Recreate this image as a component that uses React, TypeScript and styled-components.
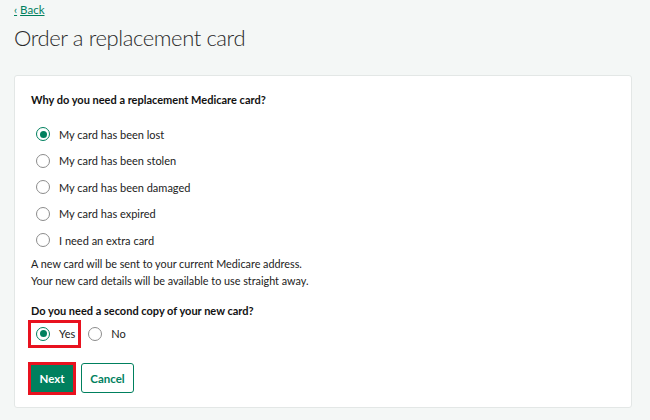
import React, { useState } from "react";
import styled, { createGlobalStyle } from "styled-components";

const GREEN = "#00805e";
const RED = "#e8121f";

const GlobalStyle = createGlobalStyle`
  html, body {
    margin: 0;
    padding: 0;
    background: #f4f7f6;
    font-family: Lato, "Open Sans", sans-serif;
    color: #222;
  }
`;

const Page = styled.div`
  padding: 1px 14px 0 14px;
  width: 618px;
`;

const BackLink = styled.a`
  display: flex;
  width: fit-content;
  align-items: center;
  gap: 3px;
  height: 16px;
  font-size: 11.5px;
  color: ${GREEN};
  text-decoration: underline;
  cursor: pointer;
  span.chev {
    font-size: 11px;
    text-decoration: none;
    display: inline-block;
  }
`;

const Title = styled.h1`
  margin: 6px 0 22px 0;
  font-size: 22px;
  line-height: 30px;
  font-weight: 300;
  letter-spacing: -0.4px;
  color: #2a2a2a;
`;

const Card = styled.form`
  background: #fff;
  border: 1px solid #e3e7e6;
  border-radius: 3px;
  padding: 16px 16px 12px 16px;
`;

const Question = styled.div<{ $gap: number }>`
  font-size: 11px;
  line-height: 16px;
  font-weight: 700;
  color: #111;
  margin-bottom: ${({ $gap }) => $gap}px;
`;

const RadioList = styled.div`
  display: flex;
  flex-direction: column;
  gap: 8px;
  margin-bottom: 5.5px;
`;

const RadioRow = styled.label<{ $highlight?: boolean }>`
  display: inline-flex;
  align-items: center;
  gap: 9px;
  height: ${({ $highlight }) => ($highlight ? "28px" : "18.5px")};
  box-sizing: border-box;
  font-size: 11px;
  color: #222;
  cursor: pointer;
  padding: ${({ $highlight }) => ($highlight ? "0 3px 0 5px" : "0 0 0 5px")};
  border: ${({ $highlight }) => ($highlight ? `3px solid ${RED}` : "none")};
`;

const Dot = styled.span<{ $checked: boolean }>`
  width: 14px;
  height: 14px;
  box-sizing: border-box;
  border-radius: 50%;
  border: 1.5px solid ${({ $checked }) => ($checked ? GREEN : "#8c8c8c")};
  display: inline-flex;
  align-items: center;
  justify-content: center;
  background: #fff;
  &::after {
    content: "";
    width: 7px;
    height: 7px;
    border-radius: 50%;
    background: ${GREEN};
    display: ${({ $checked }) => ($checked ? "block" : "none")};
  }
`;

const Info = styled.p`
  margin: 0 0 13.5px 0;
  font-size: 10.8px;
  line-height: 17px;
  color: #222;
`;

const InlineRadios = styled.div`
  display: flex;
  align-items: center;
  gap: 2px;
  margin: 0 0 14px -3px;
`;

const Actions = styled.div`
  display: flex;
  align-items: center;
  gap: 5px;
  margin-left: -3px;
`;

const Outline = styled.div`
  border: 3px solid ${RED};
  display: inline-flex;
`;

const Button = styled.button<{ $primary?: boolean }>`
  height: ${({ $primary }) => ($primary ? "27px" : "30px")};
  width: ${({ $primary }) => ($primary ? "42px" : "53px")};
  padding: 0;
  font-family: inherit;
  font-size: 11.5px;
  font-weight: 700;
  border-radius: ${({ $primary }) => ($primary ? "0" : "3px")};
  border: 1px solid ${GREEN};
  background: ${({ $primary }) => ($primary ? GREEN : "#fff")};
  color: ${({ $primary }) => ($primary ? "#fff" : GREEN)};
  cursor: pointer;
`;

const reasons = [
  "My card has been lost",
  "My card has been stolen",
  "My card has been damaged",
  "My card has expired",
  "I need an extra card",
];

export default function App() {
  const [reason, setReason] = useState(0);
  const [copy, setCopy] = useState("yes");

  return (
    <>
      <GlobalStyle />
      <Page>
        <BackLink>
          <span className="chev">‹</span>Back
        </BackLink>
        <Title>Order a replacement card</Title>
        <Card onSubmit={(e) => e.preventDefault()}>
          <Question $gap={17}>Why do you need a replacement Medicare card?</Question>
          <RadioList>
            {reasons.map((r, i) => (
              <RadioRow key={r} onClick={() => setReason(i)}>
                <Dot $checked={reason === i} />
                {r}
              </RadioRow>
            ))}
          </RadioList>
          <Info>
            A new card will be sent to your current Medicare address.
            <br />
            Your new card details will be available to use straight away.
          </Info>
          <Question $gap={1}>Do you need a second copy of your new card?</Question>
          <InlineRadios>
            <RadioRow $highlight onClick={() => setCopy("yes")}>
              <Dot $checked={copy === "yes"} />
              Yes
            </RadioRow>
            <RadioRow onClick={() => setCopy("no")}>
              <Dot $checked={copy === "no"} />
              No
            </RadioRow>
          </InlineRadios>
          <Actions>
            <Outline>
              <Button $primary type="submit">Next</Button>
            </Outline>
            <Button type="button">Cancel</Button>
          </Actions>
        </Card>
      </Page>
    </>
  );
}
